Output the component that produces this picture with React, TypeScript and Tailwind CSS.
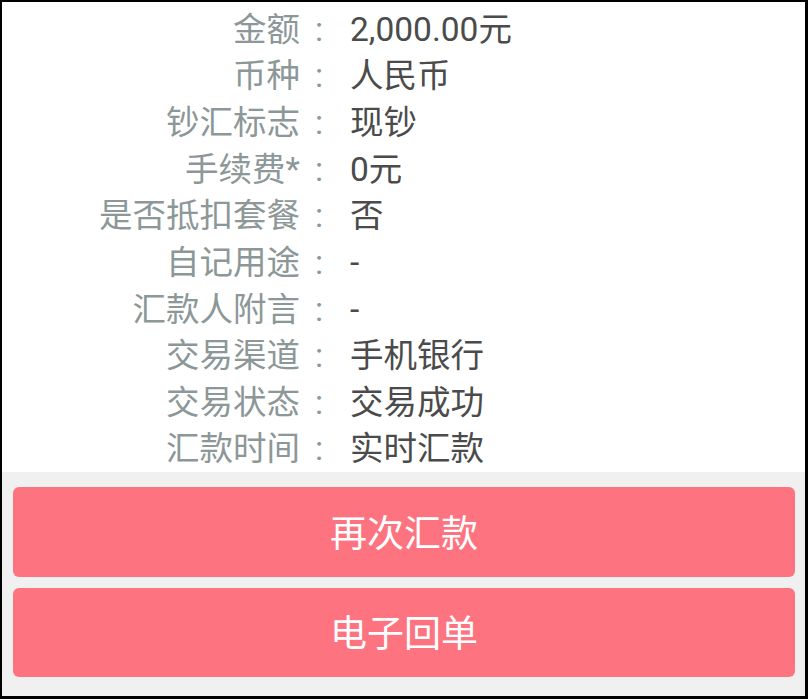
import React from 'react';

// transfer receipt detail rows
const rows: { label: string; value: string }[] = [
  { label: '金额', value: '2,000.00元' },
  { label: '币种', value: '人民币' },
  { label: '钞汇标志', value: '现钞' },
  { label: '手续费*', value: '0元' },
  { label: '是否抵扣套餐', value: '否' },
  { label: '自记用途', value: '-' },
  { label: '汇款人附言', value: '-' },
  { label: '交易渠道', value: '手机银行' },
  { label: '交易状态', value: '交易成功' },
  { label: '汇款时间', value: '实时汇款' },
];

export default function App() {
  return (
    <div
      className="w-[808px] h-[699px] border-black border-t-2 border-l-2 border-r-[3px] border-b-[3px] flex flex-col bg-[#f0f0f0]"
      style={{ fontFamily: "Roboto, 'Noto Sans CJK SC', sans-serif" }}
    >
      {/* Detail list */}
      <div className="bg-white pt-[4px] h-[470px] shrink-0">
        {rows.map((row) => (
          <div key={row.label} className="flex items-center h-[46.67px] text-[33.5px] leading-none">
            <span className="w-[298px] text-right text-[#8c9798]">{row.label}</span>
            <span className="w-[38px] text-center text-[#8c9798]">:</span>
            <span className="ml-[12px] text-[#4b4b4b]">{row.value}</span>
          </div>
        ))}
      </div>

      {/* Actions */}
      <div className="flex flex-col gap-[11px] pt-[15px] pl-[11px] pr-[10px]">
        <button className="h-[90px] pt-[5px] rounded-[6px] bg-[#fe7380] text-white text-[37px]">再次汇款</button>
        <button className="h-[89px] pt-[5px] rounded-[6px] bg-[#fe7380] text-white text-[37px]">电子回单</button>
      </div>
    </div>
  );
}
